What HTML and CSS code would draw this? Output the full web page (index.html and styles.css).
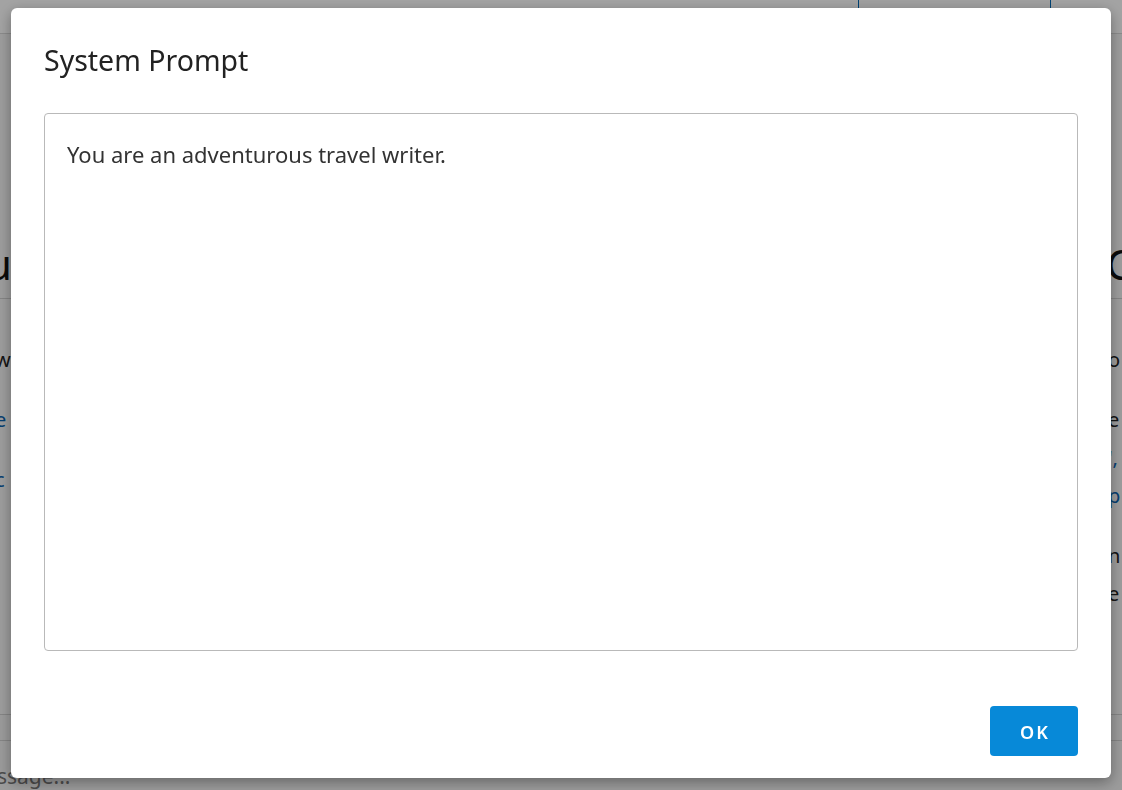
FILE: index.html
```html
<!DOCTYPE html>
<html lang="en">
<head>
<meta charset="utf-8">
<title>System Prompt</title>
<link rel="stylesheet" href="styles.css">
</head>
<body>
<div class="page">
  <header class="topbar">
    <div class="spacer"></div>
    <div class="tabgroup"><span class="tab"></span></div>
    <div class="tabrest"></div>
  </header>
  <main class="panels">
    <section class="panel panel-left">
      <h2 class="panel-title">u</h2>
      <div class="panel-body">
        <p class="para">w</p>
        <p class="para link">e</p>
        <p class="para link">c</p>
      </div>
    </section>
    <section class="panel panel-right">
      <h2 class="panel-title">C</h2>
      <div class="panel-body">
        <p class="para">o</p>
        <p class="para">e <span class="gold">I</span><br><span class="link">',</span><br><span class="link">p</span></p>
        <p class="para">n<br>e</p>
      </div>
    </section>
  </main>
  <footer class="composer">
    <div class="composer-bar"></div>
    <div class="composer-input"><span class="placeholder">Type a message...</span></div>
  </footer>
</div>

<div class="overlay">
  <div class="modal" role="dialog" aria-labelledby="modal-title">
    <h1 class="modal-title" id="modal-title">System Prompt</h1>
    <div class="prompt-box">You are an adventurous travel writer.</div>
    <div class="modal-footer">
      <button class="btn-ok" type="button">OK</button>
    </div>
  </div>
</div>
</body>
</html>
```

FILE: styles.css
```css
* { box-sizing: border-box; }

html, body {
  margin: 0;
  padding: 0;
  height: 100%;
  overflow: hidden;
}

body {
  font-family: "Noto Sans", "Open Sans", "Liberation Sans", sans-serif;
  color: #222;
  background: #ffffff;
}

/* ---------- background page ---------- */
.page {
  height: 790px;
  display: flex;
  flex-direction: column;
  background: #f2f2f2;
}

.topbar {
  height: 34px;
  flex: 0 0 34px;
  display: flex;
  background: #ffffff;
  border-bottom: 1px solid #d9d9d9;
}
.spacer { flex: 0 0 858px; }
.tabgroup {
  flex: 0 0 193px;
  border-left: 1px solid #0068b5;
  border-right: 1px solid #0068b5;
  background: #fbfbfb;
}
.tabrest { flex: 1; }

.panels {
  flex: 1;
  display: flex;
  justify-content: space-between;
  overflow: hidden;
  background: #f5f5f5;
}
.panel {
  flex: 0 0 14px;
  overflow: hidden;
  padding-top: 196px;
}
.panel-title {
  margin: 0;
  font-size: 42px;
  font-weight: 400;
  line-height: 68px;
  color: #111;
  white-space: nowrap;
}
.panel-left .panel-title { text-indent: -14px; }
.panel-right .panel-title { text-indent: -2px; }
.panel-body {
  border-top: 1px solid #cfcfcf;
  padding-top: 42px;
}
.para {
  margin: 0 0 22px;
  font-size: 20px;
  line-height: 38px;
  white-space: nowrap;
}
.panel-left .para { text-indent: -5px; }
.link { color: #0b64b0; }
.gold { color: #b8860b; }

.composer {
  flex: 0 0 76px;
  border-top: 1px solid #cfcfcf;
  background: #f2f2f2;
}
.composer-bar {
  height: 26px;
  border-bottom: 1px solid #cfcfcf;
}
.composer-input {
  padding-top: 21px;
  font-size: 21px;
  color: #777;
  white-space: nowrap;
  text-indent: -104px;
}

/* ---------- modal ---------- */
.overlay {
  position: fixed;
  inset: 0;
  background: rgba(0, 0, 0, 0.36);
}

.modal {
  position: absolute;
  left: 11px;
  top: 8px;
  width: 1100px;
  height: 770px;
  background: #ffffff;
  border-radius: 6px;
  box-shadow: 0 4px 14px rgba(0, 0, 0, 0.35);
  padding: 32px 33px 22px 33px;
  display: flex;
  flex-direction: column;
}

.modal-title {
  margin: 0;
  height: 40px;
  font-size: 28.5px;
  line-height: 40px;
  font-weight: 400;
  color: #222;
}

.prompt-box {
  margin-top: 33px;
  height: 538px;
  border: 1px solid #b9b9b9;
  border-radius: 4px;
  padding: 25px 22px;
  font-size: 22px;
  line-height: 30px;
  color: #333;
}

.modal-footer {
  flex: 1;
  display: flex;
  justify-content: flex-end;
  align-items: flex-end;
}

.btn-ok {
  width: 88px;
  height: 50px;
  border: none;
  border-radius: 4px;
  background: #0789d8;
  color: #ffffff;
  font-family: "Noto Sans", "Open Sans", sans-serif;
  font-size: 18px;
  font-weight: 600;
  letter-spacing: 2px;
  padding: 2px 0 0 2px;
  cursor: pointer;
}
```
